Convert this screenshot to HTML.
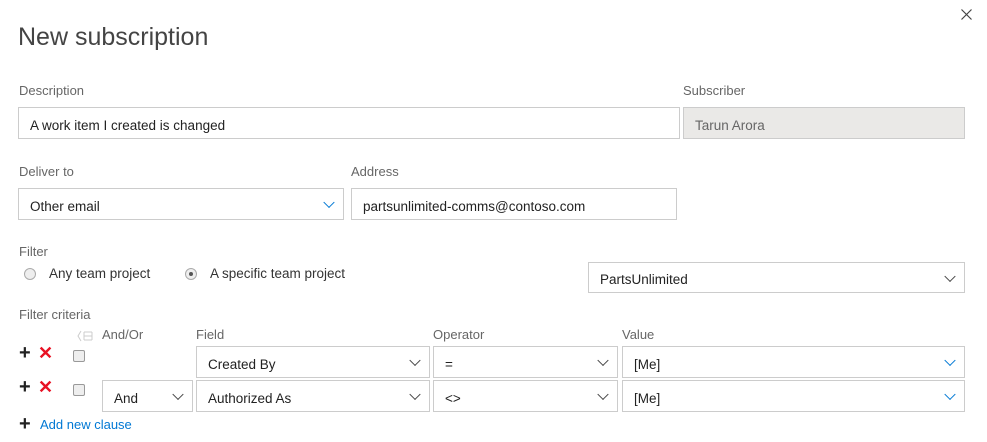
<!DOCTYPE html>
<html><head><style>
body{margin:0;width:987px;height:442px;background:#fff;font-family:"Liberation Sans",sans-serif;color:#333;position:relative;overflow:hidden}
.a{position:absolute;white-space:nowrap}
.lbl{font-size:13px;color:#666}
.box{position:absolute;box-sizing:border-box;border:1px solid #ccc;background:#fff;font-size:13.5px;color:#222;padding-left:11px;padding-top:4px;display:flex;align-items:center}
.chev{position:absolute;right:10px;top:50%;width:7px;height:7px;border-right:1.3px solid #444;border-bottom:1.3px solid #444;transform:translateY(-70%) rotate(45deg)}
.chev.b{border-color:#0078d4}
.radio{position:absolute;width:12px;height:12px;border-radius:50%;border:1px solid #aaa;background:#eee;box-sizing:border-box}
.cb{position:absolute;width:12px;height:12px;border:1px solid #999;background:#eee;border-radius:2px;box-sizing:border-box}
.plus{position:absolute;font-size:20px;font-weight:bold;color:#222;line-height:20px}
.x{position:absolute;font-size:18px;color:#e81123;font-weight:bold;line-height:18px}
</style></head><body>
<div class="a" style="left:18px;top:23px;font-size:25px;color:#444;font-weight:300">New subscription</div>
<svg class="a" style="left:961px;top:9px" width="11" height="11"><path d="M0.5 0.5L10.5 10.5M10.5 0.5L0.5 10.5" stroke="#444" stroke-width="1.2"/></svg>

<div class="a lbl" style="left:19px;top:83px">Description</div>
<div class="a lbl" style="left:683px;top:83px">Subscriber</div>
<div class="box" style="left:18px;top:107px;width:662px;height:32px">A work item I created is changed</div>
<div class="box" style="left:683px;top:107px;width:282px;height:32px;background:#eae9e7;color:#666">Tarun Arora</div>

<div class="a lbl" style="left:19px;top:164px">Deliver to</div>
<div class="a lbl" style="left:351px;top:164px">Address</div>
<div class="box" style="left:18px;top:188px;width:326px;height:32px">Other email<span class="chev b"></span></div>
<div class="box" style="left:351px;top:188px;width:326px;height:32px">partsunlimited-comms@contoso.com</div>

<div class="a lbl" style="left:19px;top:244px">Filter</div>
<div class="radio" style="left:24px;top:268px"></div>
<div class="a" style="left:49px;top:266px;font-size:13.5px">Any team project</div>
<div class="radio" style="left:185px;top:268px"><div style="position:absolute;left:3px;top:3px;width:4px;height:4px;border-radius:50%;background:#555"></div></div>
<div class="a" style="left:210px;top:266px;font-size:13.5px">A specific team project</div>
<div class="box" style="left:588px;top:262px;width:377px;height:31px">PartsUnlimited<span class="chev"></span></div>

<div class="a lbl" style="left:19px;top:307px">Filter criteria</div>
<svg class="a" style="left:77px;top:330px" width="16" height="12"><path d="M4 1L1 6L4 11M7 2H15M7 6H15M7 10H15M7 2V10M15 2V10" stroke="#ccc" fill="none"/></svg>
<div class="a lbl" style="left:102px;top:327px">And/Or</div>
<div class="a lbl" style="left:196px;top:327px">Field</div>
<div class="a lbl" style="left:433px;top:327px">Operator</div>
<div class="a lbl" style="left:622px;top:327px">Value</div>

<div class="plus" style="left:19px;top:343px">+</div>
<div class="x" style="left:38px;top:344px">✕</div>
<div class="cb" style="left:73px;top:350px"></div>
<div class="box" style="left:196px;top:346px;width:234px;height:32px">Created By<span class="chev"></span></div>
<div class="box" style="left:433px;top:346px;width:185px;height:32px">=<span class="chev"></span></div>
<div class="box" style="left:622px;top:346px;width:343px;height:32px">[Me]<span class="chev b"></span></div>

<div class="plus" style="left:19px;top:377px">+</div>
<div class="x" style="left:38px;top:378px">✕</div>
<div class="cb" style="left:73px;top:384px"></div>
<div class="box" style="left:102px;top:380px;width:91px;height:32px">And<span class="chev"></span></div>
<div class="box" style="left:196px;top:380px;width:234px;height:32px">Authorized As<span class="chev"></span></div>
<div class="box" style="left:433px;top:380px;width:185px;height:32px">&lt;&gt;<span class="chev"></span></div>
<div class="box" style="left:622px;top:380px;width:343px;height:32px">[Me]<span class="chev b"></span></div>

<div class="plus" style="left:19px;top:414px">+</div>
<div class="a" style="left:40px;top:417px;font-size:13px;color:#0078d4">Add new clause</div>
</body></html>
